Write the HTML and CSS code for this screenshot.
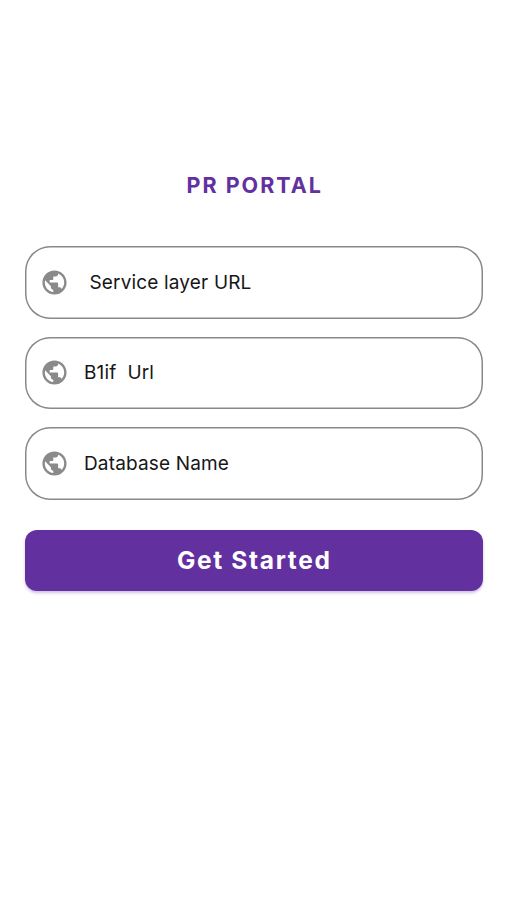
FILE: index.html
```html
<!DOCTYPE html>
<html lang="en">
<head>
<meta charset="utf-8">
<title>PR Portal</title>
<link rel="stylesheet" href="styles.css">
</head>
<body>
<svg class="defs" aria-hidden="true"><symbol id="globe" viewBox="0 0 24 24"><path d="M12 2C6.480 2 2 6.480 2 12s4.480 10 10 10 10-4.480 10-10S17.520 2 12 2zm-1 17.930c-3.950-.490-7-3.850-7-7.930 0-.620.080-1.210.210-1.790L9 15v1c0 1.100.900 2 2 2v1.930zm6.900-2.540c-.260-.810-1-1.390-1.900-1.390h-1v-3c0-.550-.450-1-1-1H8v-2h2c.550 0 1-.450 1-1V7h2c1.100 0 2-.900 2-2v-.410c2.930 1.190 5 4.060 5 7.410 0 2.080-.800 3.970-2.100 5.390z"/></symbol></svg>
<main class="screen">
  <h1 class="title">PR PORTAL</h1>
  <form class="form">
    <div class="field"><svg class="icon"><use href="#globe"/></svg><span class="label"> Service layer URL</span></div>
    <div class="field"><svg class="icon"><use href="#globe"/></svg><span class="label">B1if  Url</span></div>
    <div class="field"><svg class="icon"><use href="#globe"/></svg><span class="label">Database Name</span></div>
    <button class="start" type="button">Get Started</button>
  </form>
</main>
</body>
</html>
```
FILE: styles.css
```css
* { box-sizing: border-box; }
body { margin: 0; background: #fff; font-family: Inter, sans-serif; }
.defs { display: none; }
.screen { height: 900px; padding: 172px 24.5px 0 25px; }
.title { margin: 0 0 48px; padding-left: 2px; font-size: 21.5px; line-height: 26px; font-weight: 650; letter-spacing: 2px; text-align: center; color: #6330a0; }
.form { display: flex; flex-direction: column; gap: 18px; }
.field { height: 72.5px; display: flex; align-items: center; gap: 15px; padding: 0 15px; border-radius: 25px; box-shadow: inset 0 0 0 1.5px #898989; }
.icon { width: 29px; height: 29px; flex: none; fill: #8a8a8a; }
.label { font-size: 19px; letter-spacing: .16px; white-space: pre; color: #161616; }
.start { height: 61px; margin-top: 12px; padding: 0 0 0 1px; border: 0; border-radius: 12px; background: #6330a0; box-shadow: 0 2px 3px rgba(99, 48, 160, .3); color: #fff; font: 700 24.5px/61px Inter, sans-serif; letter-spacing: 1.65px; }
```
